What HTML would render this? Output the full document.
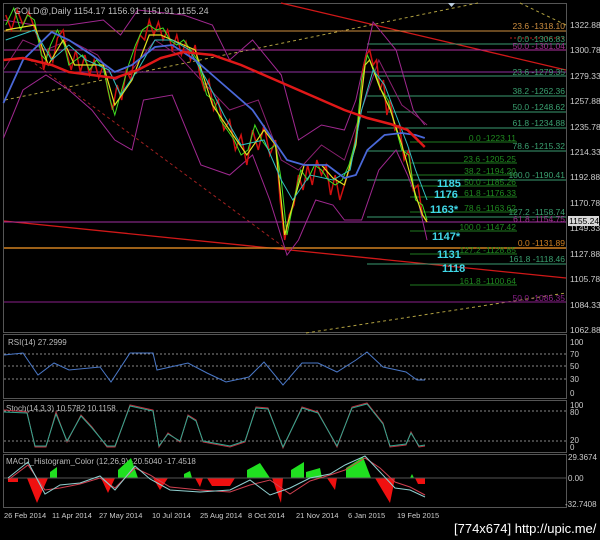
<!DOCTYPE html>
<html><head><style>
html,body{margin:0;padding:0;background:#000;width:600px;height:540px;overflow:hidden}
svg{display:block}
text{font-family:"Liberation Sans",sans-serif}
</style></head><body>
<svg width="600" height="540" viewBox="0 0 600 540" xmlns="http://www.w3.org/2000/svg">
<rect width="600" height="540" fill="#000"/>
<rect x="3.5" y="3.5" width="563" height="329" fill="none" stroke="#555" />
<rect x="3.5" y="334.5" width="563" height="64" fill="none" stroke="#555"/>
<rect x="3.5" y="400.5" width="563" height="52" fill="none" stroke="#555"/>
<rect x="3.5" y="454.5" width="563" height="53" fill="none" stroke="#555"/>

<line x1="281" y1="3" x2="566" y2="70" stroke="#d01818" stroke-width="1.3"/>
<line x1="4" y1="221" x2="566" y2="278" stroke="#d01818" stroke-width="1.3"/>
<line x1="5" y1="100" x2="478" y2="3" stroke="#b0a040" stroke-dasharray="3,3"/>
<line x1="306" y1="333" x2="566" y2="293" stroke="#b0a040" stroke-dasharray="3,3"/>
<line x1="520" y1="3" x2="566" y2="25" stroke="#b0a040" stroke-dasharray="3,3"/>
<line x1="30" y1="60" x2="285" y2="248" stroke="#a02020" stroke-dasharray="3,3"/>

<g stroke-width="1">
<line x1="4" y1="31" x2="566" y2="31" stroke="#d09040"/>
<line x1="367" y1="44" x2="566" y2="44" stroke="#3a9a70"/>
<line x1="4" y1="50" x2="566" y2="50" stroke="#b030a0"/>
<line x1="4" y1="72" x2="566" y2="72" stroke="#9030a0"/>
<line x1="378" y1="76" x2="566" y2="76" stroke="#3a9a70"/>
<line x1="367" y1="96" x2="566" y2="96" stroke="#3a9a70"/>
<line x1="367" y1="112" x2="566" y2="112" stroke="#3a9a70"/>
<line x1="367" y1="128" x2="566" y2="128" stroke="#3a9a70"/>
<line x1="410" y1="142" x2="517" y2="142" stroke="#1f7a1f"/>
<line x1="367" y1="151" x2="566" y2="151" stroke="#3a9a70"/>
<line x1="410" y1="163" x2="517" y2="163" stroke="#1f7a1f"/>
<line x1="410" y1="175" x2="517" y2="175" stroke="#1f7a1f"/>
<line x1="367" y1="180" x2="566" y2="180" stroke="#3a9a70"/>
<line x1="410" y1="186" x2="517" y2="186" stroke="#1f7a1f"/>
<line x1="410" y1="197" x2="517" y2="197" stroke="#1f7a1f"/>
<line x1="410" y1="212" x2="517" y2="212" stroke="#1f7a1f"/>
<line x1="367" y1="217" x2="566" y2="217" stroke="#3a9a70"/>
<line x1="4" y1="222" x2="566" y2="222" stroke="#a030a0"/>
<line x1="410" y1="231" x2="517" y2="231" stroke="#1f7a1f"/>
<line x1="4" y1="248" x2="566" y2="248" stroke="#d08020" stroke-width="1.5"/>
<line x1="410" y1="254" x2="517" y2="254" stroke="#1f7a1f"/>
<line x1="367" y1="264" x2="566" y2="264" stroke="#3a9a70"/>
<line x1="410" y1="285" x2="517" y2="285" stroke="#1f7a1f"/>
<line x1="4" y1="302" x2="566" y2="302" stroke="#8a208a"/>
<line x1="510" y1="38" x2="564" y2="38" stroke="#c02020" stroke-dasharray="2,2"/>
</g>

<g transform="scale(1.148,1)" fill="none">
<polyline stroke="#a02890" stroke-width="1" vector-effect="non-scaling-stroke" points="3,20 30,25 60,25 90,20 105,35 120,10 160,15 185,25 200,60 220,40 245,75 260,140 280,125 300,130 310,100 325,22 345,50 360,110 370,125"/>
<polyline stroke="#a02890" stroke-width="1" vector-effect="non-scaling-stroke" points="3,138 20,90 40,75 60,90 80,110 100,140 115,150 125,100 150,95 175,165 200,175 220,155 235,200 250,255 260,240 275,200 290,205 300,220 315,220 330,170 345,150 355,175 365,205 372,240"/>
<polyline stroke="#8a2070" stroke-width="1" vector-effect="non-scaling-stroke" points="3,70 20,40 40,50 60,40 85,55 100,80 115,70 135,40 155,55 175,80 200,110 225,100 245,160 260,170 280,145 300,160 315,110 330,60 350,105 365,118 372,125"/>
<!-- jagged candles -->
<polyline stroke="#d01010" stroke-width="1.5" vector-effect="non-scaling-stroke" points="5,15 10,30 15,10 20,25 25,12 30,28 35,45 38,70 42,50 46,62 50,38 55,30 58,52 62,70 66,50 70,72 74,55 78,75 82,60 86,78 90,65 94,90 98,110 102,85 106,100 110,70 114,80 118,50 122,35 126,40 130,20 134,35 138,22 142,40 146,30 150,50 154,35 158,55 162,42 166,60 170,45 174,75 178,90 182,80 186,110 190,100 195,130 200,120 205,150 210,135 215,165 220,130 225,150 230,125 235,155 240,140 244,200 248,240 252,215 256,205 260,175 264,190 268,165 272,185 276,160 280,175 284,165 288,195 292,175 296,200 300,185 304,170 308,150 312,120 316,70 319,55 322,50 325,65 328,60 331,90 334,80 337,115 340,100 344,130 348,125 352,160 356,150 360,190 364,185 368,215 372,222"/>
<polyline stroke="#40e020" stroke-width="1" vector-effect="non-scaling-stroke" points="5,25 12,8 18,30 24,15 30,20 36,55 40,60 44,45 50,30 56,45 60,65 66,60 72,55 78,70 84,60 90,68 96,100 100,115 106,90 112,65 118,45 124,30 130,25 136,30 142,28 148,40 154,45 160,40 166,50 172,60 180,95 186,100 192,120 198,130 204,140 210,155 216,150 222,125 228,140 234,150 240,145 245,180 250,235 256,200 262,170 268,180 274,165 280,170 286,180 292,185 298,180 304,165 310,140 315,80 320,55 326,70 332,90 338,100 344,125 350,150 356,155 362,200 368,205 372,220"/>
<polyline stroke="#e0e020" stroke-width="1.2" vector-effect="non-scaling-stroke" points="5,30 30,25 42,65 55,40 65,65 90,65 100,105 115,80 130,35 140,35 160,45 170,50 185,105 200,130 215,155 230,130 240,145 248,235 255,205 265,165 280,165 290,178 300,185 310,145 318,65 322,60 330,85 340,110 350,145 355,165 362,195 368,215 372,222"/>
<polyline stroke="#30c0c0" stroke-width="1" vector-effect="non-scaling-stroke" points="5,40 30,30 45,60 60,45 75,60 95,70 105,95 120,70 135,40 150,40 165,50 180,80 195,115 210,145 230,140 245,180 255,200 270,175 290,180 305,170 315,110 325,70 335,85 345,115 355,145 362,170 372,200"/>
<polyline stroke="#4a68d8" stroke-width="1.8" vector-effect="non-scaling-stroke" points="3,103 20,60 45,32 60,40 80,55 100,72 115,65 135,47 150,45 170,60 190,80 220,110 250,160 265,165 285,165 300,178 310,175 320,150 335,135 350,133 362,135 370,138"/>
<polyline stroke="#e01818" stroke-width="2.5" vector-effect="non-scaling-stroke" points="3,60 20,58 45,65 60,72 80,75 100,78 120,70 140,58 160,52 185,55 210,65 240,80 270,95 300,110 320,118 340,124 355,130 370,147"/>
</g>

<text x="14" y="14" font-size="9" fill="#bbb">GOLD@,Daily  1154.17 1156.91 1151.91 1155.24</text>
<path d="M448 3 L455 3 L451.5 7Z" fill="#bcd"/>

<g font-size="8.5" text-anchor="end">
<text x="565" y="29" fill="#d09040">23.6 -1318.10</text>
<text x="565" y="42" fill="#3aa070">0.0 -1306.83</text>
<text x="565" y="49" fill="#a03090">50.0 -1301.04</text>
<text x="565" y="75" fill="#3aa070">23.6 -1279.35</text>
<text x="565" y="94" fill="#3aa070">38.2 -1262.36</text>
<text x="565" y="110" fill="#3aa070">50.0 -1248.62</text>
<text x="565" y="126" fill="#3aa070">61.8 -1234.88</text>
<text x="516" y="141" fill="#1f8a1f">0.0 -1223.11</text>
<text x="565" y="149" fill="#3aa070">78.6 -1215.32</text>
<text x="516" y="162" fill="#1f8a1f">23.6 -1205.25</text>
<text x="516" y="174" fill="#1f8a1f">38.2 -1194.20</text>
<text x="565" y="178" fill="#3aa070">100.0 -1190.41</text>
<text x="516" y="185" fill="#1f8a1f">50.0 -1185.26</text>
<text x="516" y="196" fill="#1f8a1f">61.8 -1176.33</text>
<text x="516" y="211" fill="#1f8a1f">78.6 -1163.62</text>
<text x="565" y="215" fill="#3aa070">127.2 -1158.74</text>
<text x="565" y="222" fill="#a03090">61.8 -1154.75</text>
<text x="516" y="230" fill="#1f8a1f">100.0 -1147.42</text>
<text x="565" y="246" fill="#d08020">0.0 -1131.89</text>
<text x="516" y="253" fill="#1f8a1f">127.2 -1128.85</text>
<text x="565" y="262" fill="#3aa070">161.8 -1118.46</text>
<text x="516" y="284" fill="#1f8a1f">161.8 -1100.64</text>
<text x="565" y="301" fill="#8a208a">50.0 -1086.35</text>
</g>
<g font-size="11" font-weight="bold" fill="#40d8e8">
<text x="437" y="187">1185</text>
<text x="434" y="198">1176</text>
<text x="430" y="213">1163*</text>
<text x="432" y="240">1147*</text>
<text x="437" y="258">1131</text>
<text x="442" y="272">1118</text>
</g>

<g font-size="8.5" fill="#ccc">
<text x="570" y="28">1322.88</text><text x="570" y="53">1300.78</text><text x="570" y="79">1279.33</text>
<text x="570" y="104">1257.88</text><text x="570" y="130">1235.78</text><text x="570" y="155">1214.33</text>
<text x="570" y="180">1192.88</text><text x="570" y="206">1170.78</text><text x="570" y="231">1149.33</text>
<text x="570" y="257">1127.88</text><text x="570" y="282">1105.78</text><text x="570" y="308">1084.33</text>
<text x="570" y="333">1062.88</text>
</g>
<rect x="568" y="216" width="31" height="10" fill="#d8d8d8"/>
<text x="569" y="224" font-size="8.5" fill="#000">1155.24</text>

<g stroke="#888" stroke-dasharray="2,2"><line x1="4" y1="354" x2="566" y2="354"/><line x1="4" y1="366" x2="566" y2="366"/><line x1="4" y1="379" x2="566" y2="379"/></g>
<text x="8" y="345" font-size="8" fill="#bbb">RSI(14) 27.2999</text>
<polyline fill="none" stroke="#4a78c8" stroke-width="1" points="4,355 23,353 38,375 54,363 69,370 100,367 111,382 130,353 153,353 157,370 188,363 207,373 226,382 249,377 264,362 283,385 302,363 318,363 337,372 356,360 367,352 383,367 406,372 417,380 425,380"/>
<g font-size="8" fill="#ccc"><text x="570" y="345">100</text><text x="570" y="357">70</text><text x="570" y="369">50</text><text x="570" y="382">30</text><text x="570" y="396">0</text></g>

<g stroke="#888" stroke-dasharray="2,2"><line x1="4" y1="411" x2="566" y2="411"/><line x1="4" y1="441" x2="566" y2="441"/></g>
<text x="6" y="411" font-size="8" fill="#bbb">Stoch(14,3,3) 10.5782 10.1158</text>
<polyline fill="none" stroke="#c03040" stroke-width="1" points="4,410 27,412 35,447 46,447 56,412 67,442 81,415 92,427 107,447 115,447 130,405 153,410 159,447 168,433 180,442 188,415 196,420 203,442 230,447 245,442 256,407 268,408 283,448 302,407 318,412 337,447 352,407 367,403 383,423 390,447 406,445 411,432 419,447 425,446"/>
<polyline fill="none" stroke="#30a890" stroke-width="1" points="4,412 27,413 35,446 46,446 56,414 67,441 81,416 92,428 107,446 115,446 130,406 153,411 159,446 168,434 180,441 188,416 196,421 203,441 230,446 245,441 256,408 268,409 283,447 302,408 318,413 337,446 352,408 367,404 383,424 390,446 406,444 411,433 419,446 425,445"/>
<g font-size="8" fill="#ccc"><text x="570" y="408">100</text><text x="570" y="415">80</text><text x="570" y="443">20</text><text x="570" y="450">0</text></g>

<text x="6" y="464" font-size="8" fill="#bbb">MACD_Histogram_Color (12,26,9)  -20.5040 -17.4518</text>
<g stroke="none">
<polygon fill="#f01010" points="8,478 18,478 18,482 8,482"/>
<polygon fill="#f01010" points="27,478 48,478 37,503"/>
<polygon fill="#20e020" points="50,478 57,478 57,467 50,472"/>
<polygon fill="#f01010" points="101,478 115,478 108,493"/>
<polygon fill="#20e020" points="118,478 138,478 131,458 118,470"/>
<polygon fill="#f01010" points="153,478 168,478 160,490"/>
<polygon fill="#20e020" points="184,478 192,478 190,471 184,474"/>
<polygon fill="#f01010" points="195,478 203,478 200,487"/>
<polygon fill="#f01010" points="207,478 235,478 230,486 212,486"/>
<polygon fill="#20e020" points="247,478 270,478 260,463 247,470"/>
<polygon fill="#f01010" points="272,478 283,478 281,503"/>
<polygon fill="#20e020" points="291,478 304,478 304,462 291,470"/>
<polygon fill="#20e020" points="306,478 322,478 320,468 306,472"/>
<polygon fill="#f01010" points="327,478 337,478 335,490"/>
<polygon fill="#20e020" points="346,478 371,478 363,457 346,468"/>
<polygon fill="#f01010" points="375,478 395,478 390,503"/>
<polygon fill="#20e020" points="410,478 414,478 412,474"/>
<polygon fill="#f01010" points="415,478 425,478 425,484 418,484"/>
</g>
<line x1="4" y1="478" x2="566" y2="478" stroke="#555"/>
<polyline fill="none" stroke="#d04050" stroke-width="1" points="8,480 28,465 45,490 60,488 80,484 100,478 115,488 135,468 150,475 170,487 200,490 230,492 250,485 270,480 290,494 310,481 330,475 345,470 365,458 380,468 395,482 410,487 425,495"/>
<polyline fill="none" stroke="#90d0d0" stroke-width="1" points="8,478 28,462 45,494 60,485 80,483 100,476 115,490 135,466 150,479 170,490 200,492 230,490 250,480 270,495 290,488 310,478 330,474 345,465 365,456 380,472 395,488 410,490 425,497"/>
<g font-size="8" fill="#ccc"><text x="568" y="460">29.3674</text><text x="568" y="481">0.00</text><text x="565" y="507">-32.7408</text></g>

<g font-size="7.5" fill="#ccc">
<text x="4" y="518">26 Feb 2014</text><text x="52" y="518">11 Apr 2014</text><text x="99" y="518">27 May 2014</text>
<text x="152" y="518">10 Jul 2014</text><text x="200" y="518">25 Aug 2014</text><text x="248" y="518">8 Oct 2014</text>
<text x="296" y="518">21 Nov 2014</text><text x="348" y="518">6 Jan 2015</text><text x="397" y="518">19 Feb 2015</text>
</g>
<text x="454" y="533" font-size="13" fill="#fff">[774x674] http://upic.me/</text>
</svg>
</body></html>
